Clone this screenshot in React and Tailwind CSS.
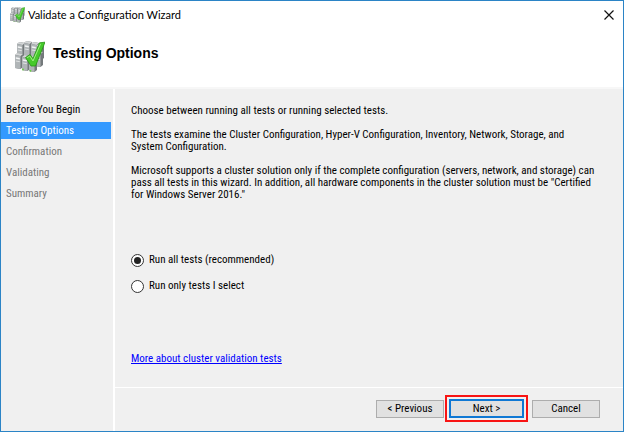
import { useState } from 'react'

const steps = ['Before You Begin', 'Testing Options', 'Confirmation', 'Validating', 'Summary']

const options = [
  { id: 'all', label: 'Run all tests (recommended)' },
  { id: 'selected', label: 'Run only tests I select' },
]

function stepStyle(i, current) {
  if (i === current) return 'bg-[#3399ff] text-white'
  return i < current ? 'text-black' : 'text-[#777777]'
}

// One tower: light front face, dark side, drive slots near the top
function Server({ x, y }) {
  return (
    <g transform={`translate(${x} ${y})`}>
      <path d="M0 2 L2.5 0 L8 1 L8 14 L5.5 16 L0 15 Z" fill="#74797b" />
      <path d="M0 2 L2.5 0 L8 1 L5.5 3 Z" fill="#d3d6d7" />
      <path d="M0 2 L5.5 3 L5.5 16 L0 15 Z" fill="#b0b5b7" />
      <path d="M0.8 4.3 L4.8 5 L4.8 6.4 L0.8 5.7 Z" fill="#f4f5f5" />
      <path d="M0.8 8 L4.8 8.7" stroke="#dfe2e3" strokeWidth="1" />
    </g>
  )
}

function ClusterIcon({ className }) {
  return (
    <svg viewBox="0 0 32 32" className={className} aria-hidden="true">
      <Server x={4} y={1} />
      <Server x={11} y={0} />
      <Server x={18} y={1} />
      <Server x={23} y={3} />
      <Server x={22} y={10} />
      <Server x={2} y={12} />
      <Server x={9} y={14} />
      <Server x={16} y={15} />
      <circle cx="10" cy="28.5" r="0.9" fill="#62d13a" />
      <circle cx="17.5" cy="29.8" r="0.9" fill="#62d13a" />
      <path d="M12.5 16.5 L17 13.5 L20 17.5 L26.5 1.8 L32 1.2 L22.5 25 L18 25 Z"
        fill="#46c92c" stroke="#269414" strokeWidth="0.8" strokeLinejoin="round" />
      <path d="M14.2 16.7 L16.8 15 L20 20 L27.6 2.8" fill="none" stroke="#a0ee82" strokeWidth="1" />
    </svg>
  )
}

export default function App() {
  const [selected, setSelected] = useState('all')
  const current = 1

  return (
    <div className="flex min-h-screen flex-col border border-[#2b84c6] bg-[#f0f0f0] font-['Roboto_Condensed','Liberation_Sans',sans-serif] text-[11px] leading-3 text-black">
      <header className="border-b-2 border-[#f7f7f7] bg-white">
        <div className="flex h-7 items-center pl-2 pr-1">
          <ClusterIcon className="h-4 w-4" />
          <span className="ml-[3px] font-['Lato','Segoe_UI',sans-serif] leading-4">Validate a Configuration Wizard</span>
          <button aria-label="Close" className="ml-auto flex h-5 w-5 items-center justify-center">
            <svg viewBox="0 0 10 10" className="h-[10px] w-[10px]" fill="none" stroke="#111" strokeWidth="1.2">
              <path d="M0.5 0.5 L9.5 9.5 M9.5 0.5 L0.5 9.5" />
            </svg>
          </button>
        </div>
        <div className="flex h-[58px] items-start pl-3 pt-3">
          <ClusterIcon className="h-8 w-8" />
          <h1 className="ml-2 mt-1 font-['Liberation_Sans',Arial,sans-serif] text-[14px] font-bold leading-4">Testing Options</h1>
        </div>
      </header>

      <div className="flex flex-1">
        <nav className="flex w-28 shrink-0 flex-col gap-1 pr-[2px] pt-3">
          {steps.map((step, i) => (
            <div key={step} aria-current={i === current ? 'step' : undefined}
              className={`flex h-[17px] items-center pl-[5px] ${stepStyle(i, current)}`}>
              {step}
            </div>
          ))}
        </nav>

        <div className="flex min-w-0 flex-1 flex-col border-l-2 border-white">
          <main className="flex flex-1 flex-col pl-4 pr-7 pt-4">
            <div className="flex flex-col gap-3">
              <p>Choose between running all tests or running selected tests.</p>
              <p>
                The tests examine the Cluster Configuration, Hyper-V Configuration, Inventory, Network, Storage, and
                System Configuration.
              </p>
              <p>
                Microsoft supports a cluster solution only if the complete configuration (servers, network, and storage) can
                pass all tests in this wizard. In addition, all hardware components in the cluster solution must be "Certified
                for Windows Server 2016."
              </p>
            </div>

            <div className="mt-[52px] flex flex-col gap-3">
              {options.map(({ id, label }) => (
                <label key={id} className="flex h-[14px] items-center gap-[5px]">
                  <input type="radio" name="tests" value={id} checked={selected === id}
                    onChange={() => setSelected(id)}
                    className="grid h-[13px] w-[13px] appearance-none place-items-center rounded-full border border-[#333333] bg-white before:h-[7px] before:w-[7px] before:rounded-full checked:before:bg-[#222222]" />
                  {label}
                </label>
              ))}
            </div>

            <div className="mt-[60px]">
              <a href="#validation" className="text-[#0000ff] underline">More about cluster validation tests</a>
            </div>
          </main>

          <footer className="flex items-center justify-end border-t border-white pb-[9px] pr-[23px] pt-[7px]">
            <button className="mr-px h-[18px] w-[68px] border border-[#adadad] bg-[#e1e1e1]">&lt; Previous</button>
            <div className="mr-1 border-2 border-[#f81414] p-[2px]">
              <button className="block h-[19px] w-[75px] border-2 border-[#0f78d4] bg-[#e1e1e1]">Next &gt;</button>
            </div>
            <button className="h-[18px] w-[68px] border border-[#adadad] bg-[#e1e1e1]">Cancel</button>
          </footer>
        </div>
      </div>
    </div>
  )
}
